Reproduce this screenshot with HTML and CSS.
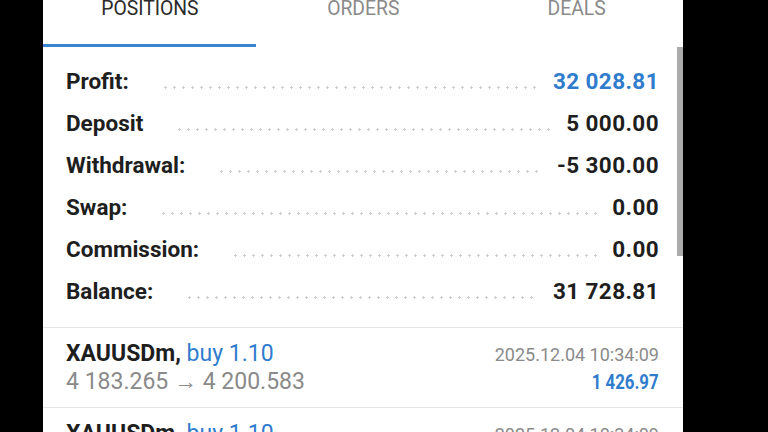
FILE: index.html
```html
<!DOCTYPE html>
<html lang="en">

<head>
    <meta charset="UTF-8">
    <meta name="viewport" content="width=device-width, initial-scale=1.0">
    <title>Trade History</title>
    <link rel="stylesheet" href="styles.css">
</head>

<body>

    <div class="panel">
        <div class="tabs">
            <div class="tab active"><span class="narrow">POSITIONS</span></div>
            <div class="tab"><span class="narrow">ORDERS</span></div>
            <div class="tab"><span class="narrow">DEALS</span></div>
        </div>

        <div class="summary">
            <div class="row">
                <span class="label">Profit:</span>
                <span class="dots"></span>
                <span class="value blue">32 028.81</span>
            </div>
            <div class="row">
                <span class="label">Deposit</span>
                <span class="dots"></span>
                <span class="value">5 000.00</span>
            </div>
            <div class="row">
                <span class="label">Withdrawal:</span>
                <span class="dots"></span>
                <span class="value">-5 300.00</span>
            </div>
            <div class="row">
                <span class="label">Swap:</span>
                <span class="dots"></span>
                <span class="value">0.00</span>
            </div>
            <div class="row">
                <span class="label">Commission:</span>
                <span class="dots"></span>
                <span class="value">0.00</span>
            </div>
            <div class="row">
                <span class="label">Balance:</span>
                <span class="dots"></span>
                <span class="value">31 728.81</span>
            </div>
        </div>

        <div class="position">
            <div class="line">
                <span class="symbol"><b>XAUUSDm,</b> <span class="blue">buy 1.10</span></span>
                <span class="time">2025.12.04 10:34:09</span>
            </div>
            <div class="line">
                <span class="price">4 183.265 &rarr; 4 200.583</span>
                <span class="pnl blue">1 426.97</span>
            </div>
        </div>

        <div class="position">
            <div class="line">
                <span class="symbol"><b>XAUUSDm,</b> <span class="blue">buy 1.10</span></span>
                <span class="time">2025.12.04 10:34:09</span>
            </div>
            <div class="line">
                <span class="price">4 183.265 &rarr; 4 200.583</span>
                <span class="pnl blue">1 426.97</span>
            </div>
        </div>

        <div class="scrollbar"></div>
    </div>

</body>

</html>
```

FILE: styles.css
```css
body {
    font-family: Roboto, "Noto Sans", sans-serif;
    background-color: #000;
    margin: 0;
    padding: 0;
    height: 432px;
    overflow: hidden;
}

.panel {
    position: relative;
    background-color: #fff;
    margin-left: 43px;
    width: 640px;
    height: 432px;
    overflow: hidden;
}

.tabs {
    display: flex;
    height: 47px;
}

.tab {
    flex: 1;
    text-align: center;
    font-size: 21px;
    line-height: 24px;
    margin-top: -4px;
    color: #8a8a8a;
}

.tab.active {
    color: #2b2b2b;
    border-bottom: 3px solid #3a83d3;
}

.tab .narrow {
    display: inline-block;
    transform: scaleX(0.92);
    white-space: nowrap;
}

.summary {
    padding: 13px 24px 15px 23px;
    border-bottom: 1px solid #e6e6e6;
}

.row {
    display: flex;
    align-items: baseline;
    height: 42px;
    line-height: 42px;
    font-size: 22.5px;
    font-weight: bold;
    color: #1e1e1e;
}

.value {
    letter-spacing: 0.4px;
}

.dots {
    flex: 1;
    height: 3px;
    margin: 0 14px 0 32px;
    background-image: radial-gradient(circle, #cecece 1.1px, transparent 1.4px);
    background-size: 9px 3px;
}

.blue {
    color: #2f7ccd;
}

.position {
    height: 79px;
    padding: 0 24px 0 23px;
    border-bottom: 1px solid #e6e6e6;
}

.line {
    display: flex;
    justify-content: space-between;
    align-items: baseline;
    height: 28px;
    line-height: 28px;
    white-space: nowrap;
}

.line:first-child {
    padding-top: 12px;
}

.symbol {
    font-size: 23px;
    color: #1e1e1e;
}

.symbol b {
    font-weight: bold;
}

.price {
    font-size: 23px;
    color: #8a8a8a;
}

.time {
    font-size: 18px;
    color: #8a8a8a;
}

.pnl {
    display: inline-block;
    font-size: 20px;
    font-weight: bold;
    transform: scaleX(0.84);
    transform-origin: right;
}

.scrollbar {
    position: absolute;
    right: 0;
    top: 47px;
    width: 6px;
    height: 209px;
    background-color: #ababab;
}
```
